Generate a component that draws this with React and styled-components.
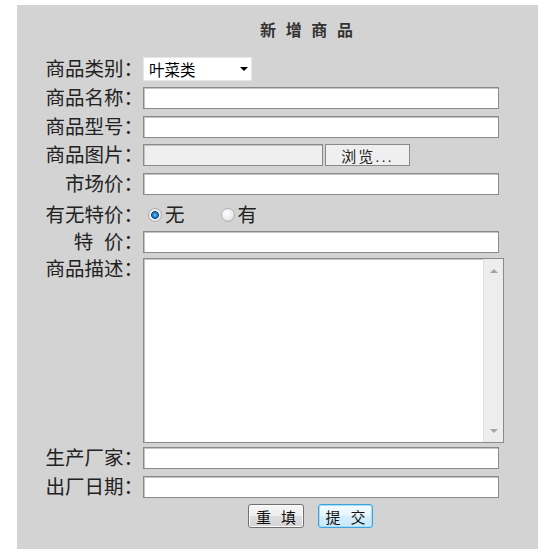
import React, { useState } from 'react';
import styled, { createGlobalStyle } from 'styled-components';

const FONT = `"Liberation Sans", "Noto Sans CJK SC", sans-serif`;

const GlobalStyle = createGlobalStyle`
  body {
    margin: 0;
    background: #fff;
    font-family: ${FONT};
  }
`;

const App = () => {
  const [special, setSpecial] = useState('no');

  return (
    <>
      <GlobalStyle />
      <Panel onSubmit={(e) => e.preventDefault()}>
        <Title>新 增 商 品</Title>

        <Row>
          <Label>商品类别：</Label>
          <Select>
            <span>叶菜类</span>
            <Caret />
          </Select>
        </Row>
        <Row $mt={6}>
          <Label>商品名称：</Label>
          <TextInput />
        </Row>
        <Row $mt={7}>
          <Label>商品型号：</Label>
          <TextInput />
        </Row>
        <Row $mt={6}>
          <Label>商品图片：</Label>
          <TextInput $w={180} $bg="#efefef" readOnly />
          <BrowseButton type="button">浏览...</BrowseButton>
        </Row>
        <Row $mt={7}>
          <Label>市场价：</Label>
          <TextInput />
        </Row>
        <Row $mt={8}>
          <Label>有无特价：</Label>
          <RadioGroup>
            <RadioOption>
              <Radio name="special" checked={special === 'no'} onChange={() => setSpecial('no')} />
              无
            </RadioOption>
            <RadioOption>
              <Radio name="special" checked={special === 'yes'} onChange={() => setSpecial('yes')} />
              有
            </RadioOption>
          </RadioGroup>
        </Row>
        <Row $mt={4}>
          <Label>特  价：</Label>
          <TextInput />
        </Row>
        <Row $mt={5} $top>
          <Label>商品描述：</Label>
          <DescBox>
            <DescArea />
            <ScrollGutter>
              <ScrollArrow />
              <ScrollArrow $down />
            </ScrollGutter>
          </DescBox>
        </Row>
        <Row $mt={4}>
          <Label>生产厂家：</Label>
          <TextInput />
        </Row>
        <Row $mt={7}>
          <Label>出厂日期：</Label>
          <TextInput />
        </Row>

        <ButtonRow>
          <Button type="reset" $w={56}>重 填</Button>
          <Button type="submit" $w={55} $primary>提 交</Button>
        </ButtonRow>
      </Panel>
    </>
  );
};

///STYLED COMPONENTS///
const Panel = styled.form`
  box-sizing: border-box;
  width: 521px;
  height: 544px;
  margin: 5px 0 0 17px;
  padding-top: 16px;
  background: #d3d3d3;
  color: #222;
`;

const Title = styled.h3`
  margin: 0 0 16px;
  padding-left: 243px;
  font-size: 16px;
  line-height: 20px;
  font-weight: 600;
  letter-spacing: 2.6px;
  color: #333;
  white-space: pre;
`;

const Row = styled.div`
  display: flex;
  align-items: ${(p) => (p.$top ? 'flex-start' : 'center')};
  margin-top: ${(p) => p.$mt || 0}px;
`;

const Label = styled.label`
  flex: 0 0 126px;
  text-align: right;
  font-size: 19.5px;
  line-height: 22px;
  white-space: pre;
  color: #222;
`;

const TextInput = styled.input`
  box-sizing: border-box;
  width: ${(p) => p.$w || 356}px;
  height: 22px;
  margin: 0;
  padding: 1px 4px;
  border: 1px solid #8a8a8a;
  box-shadow: inset 1px 1px 0 #c4c4c4;
  background: ${(p) => p.$bg || '#fff'};
  font: 14px ${FONT};
  outline: none;
`;

const Select = styled.div`
  box-sizing: border-box;
  width: 109px;
  height: 24px;
  display: flex;
  align-items: center;
  justify-content: space-between;
  padding: 0 3px 0 5px;
  background: #fff;
  border: 1px solid #e6e6e6;
  font-size: 15.5px;
  color: #000;
`;

const Caret = styled.span`
  width: 0;
  height: 0;
  border-left: 4px solid transparent;
  border-right: 4px solid transparent;
  border-top: 4px solid #000;
`;

const BrowseButton = styled.button`
  box-sizing: border-box;
  width: 85px;
  height: 22px;
  margin: 0 0 0 2px;
  padding: 0;
  border: 1px solid #8a8a8a;
  background: #efefef;
  font: 15px ${FONT};
  letter-spacing: 2px;
  color: #222;
`;

const RadioGroup = styled.div`
  display: flex;
  align-items: center;
  height: 24px;
  padding-left: 5px;
`;

const RadioOption = styled.label`
  display: flex;
  align-items: center;
  margin-right: 36px;
  font-size: 19.5px;
  line-height: 22px;
  color: #222;
`;

const Radio = styled.input.attrs({ type: 'radio' })`
  appearance: none;
  box-sizing: border-box;
  width: 14px;
  height: 14px;
  margin: 0 3px 0 0;
  border-radius: 50%;
  border: 1px solid #b0b0b0;
  background: radial-gradient(circle at 40% 35%, #ffffff 0, #ececec 55%, #c9c9c9 100%);

  &:checked {
    background: radial-gradient(circle at 50% 50%, #6cc4f4 0, #1f7cc4 2.4px, #0b4a86 3.6px, #f4f4f4 4.3px, #e2e2e2 6px);
  }
`;

const DescBox = styled.div`
  box-sizing: border-box;
  display: flex;
  width: 361px;
  height: 185px;
  border: 1px solid #8a8a8a;
  box-shadow: inset 1px 1px 0 #c4c4c4;
  background: #fff;
`;

const DescArea = styled.textarea`
  flex: 1;
  margin: 0;
  padding: 2px 4px;
  border: none;
  outline: none;
  resize: none;
  overflow: hidden;
  background: transparent;
  font: 14px ${FONT};
`;

const ScrollGutter = styled.div`
  box-sizing: border-box;
  flex: 0 0 20px;
  display: flex;
  flex-direction: column;
  justify-content: space-between;
  align-items: center;
  padding: 10px 0 9px;
  background: #ededed;
  border-left: 1px solid #e0e0e0;
`;

const ScrollArrow = styled.span`
  width: 0;
  height: 0;
  border-left: 4px solid transparent;
  border-right: 4px solid transparent;
  ${(p) => (p.$down ? 'border-top: 4px solid #a4a4a4;' : 'border-bottom: 4px solid #a4a4a4;')}
`;

const ButtonRow = styled.div`
  display: flex;
  gap: 14px;
  margin-top: 6px;
  padding-left: 231px;
`;

const Button = styled.button`
  box-sizing: border-box;
  width: ${(p) => p.$w}px;
  height: 24px;
  padding: 0 0 0 3px;
  border-radius: 3px;
  border: 1px solid ${(p) => (p.$primary ? '#3ca4dc' : '#707070')};
  box-shadow: inset 0 0 0 1px ${(p) => (p.$primary ? '#a8dcf6' : '#fcfcfc')};
  background: ${(p) =>
    p.$primary
      ? 'linear-gradient(#f4fbff, #e6f5fd 50%, #d6eefb 50%, #c8e8f9)'
      : 'linear-gradient(#f6f6f6, #eeeeee 50%, #dfdfdf 50%, #d3d3d3)'};
  font: 15px ${FONT};
  letter-spacing: 3px;
  white-space: pre;
  color: #111;
`;

export default App;
